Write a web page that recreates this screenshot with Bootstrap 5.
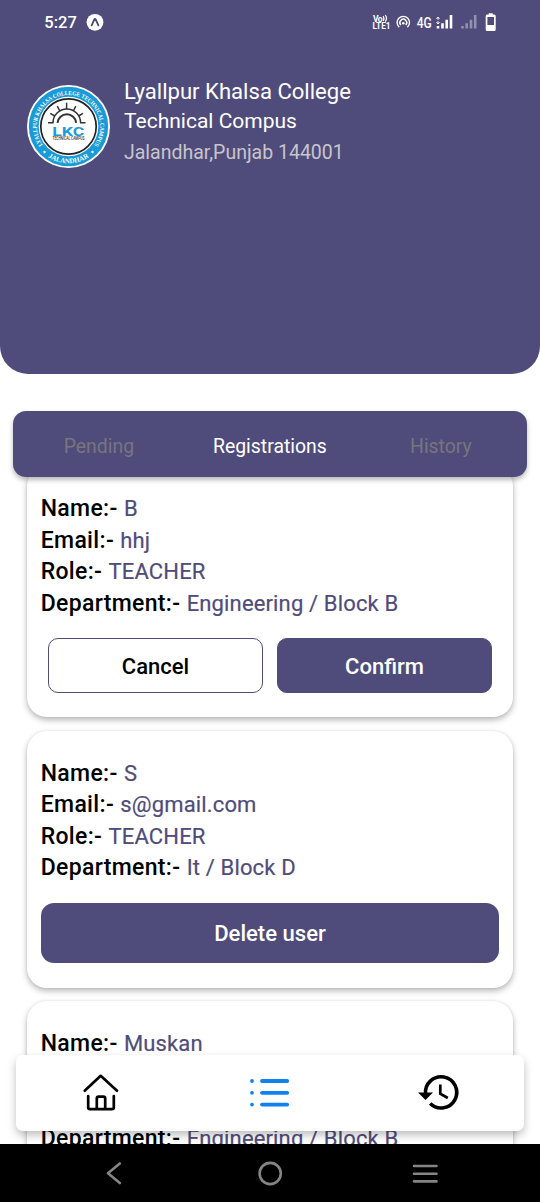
<!DOCTYPE html>
<html lang="en">
<head>
<meta charset="utf-8">
<meta name="viewport" content="width=device-width, initial-scale=1">
<title>Registrations</title>
<link href="https://cdn.jsdelivr.net/npm/bootstrap@5.3.0/dist/css/bootstrap.min.css" rel="stylesheet">
<style>
:root { --brand: #4f4c7b; }
body { font-family: Roboto, sans-serif; background: #fff; color: #000; }
svg { display: block; overflow: visible; }
.phone { width: 540px; height: 1202px; }
.screen { height: 1144px; }
.hero { height: 374px; background: var(--brand); border-radius: 0 0 28px 28px; }
.status { height: 44px; padding: 0 44px; font-size: 16.5px; }
.brand-row { padding: 37px 27px 0; gap: 14px; }
.crest { margin-top: 4px; }
.college { margin-top: -4px; }
.title { font-size: 22.1px; line-height: 29px; }
.campus { font-size: 21px; line-height: 30px; }
.place { font-size: 19.5px; line-height: 26px; color: #c8c5cb; margin-top: 3.5px; }
.tabs { height: 66px; margin: 37.4px 13.4px 0; background: var(--brand); border-radius: 13px; z-index: 2; font-size: 19.4px; box-shadow: 0 3px 5px rgba(0,0,0,.28); }
.tabs .nav-link { color: #77757e; padding: 4px 0 0; width: 171px; }
.tabs .nav-link.active { color: #fff; }
.people { margin: -11.4px 26.7px 0; gap: 13.3px; }
.person { border: 0; border-radius: 20px; padding: 27px 14px 0; box-shadow: 0 3px 6px rgba(0,0,0,.28), 0 0 3px rgba(0,0,0,.08); }
.field { font-size: 22px; line-height: 31.6px; white-space: nowrap; }
.field b { font-weight: 500; font-size: 23px; letter-spacing: .33px; margin-right: .8px; }
.field span { color: var(--brand); letter-spacing: .15px; -webkit-text-stroke: .2px var(--brand); }
.choices { padding: 18.5px 7px 24.5px; gap: 13.5px; }
.choice { height: 55px; border-radius: 10px; border: 1.35px solid var(--brand); font-size: 22px; font-weight: 500; padding: 3px 0 0; --bs-btn-color: #000; }
.solid { background: var(--brand); color: #fff; }
.remove { height: 60.5px; margin: 18.5px 0 24.5px; border: 0; border-radius: 13px; font-size: 22.1px; font-weight: 500; padding: 2px 0 0; }
.dock { left: 16px; right: 16px; bottom: 13.5px; height: 76px; background: #fff; border-radius: 7px; z-index: 3; box-shadow: 0 4px 8px rgba(0,0,0,.26); }
.system { height: 58px; background: #000; }
</style>
</head>
<body>
<div class="phone d-flex flex-column overflow-hidden">
  <main class="screen d-flex flex-column position-relative overflow-hidden flex-shrink-0">
    <header class="hero text-white flex-shrink-0">
      <div class="status d-flex align-items-center justify-content-between fw-medium">
        <svg width="60" height="44" viewBox="44 0 60 44">
          <text x="44.3" y="28.4" font-size="16.5" font-weight="500" fill="#fff" textLength="32.5">5:27</text>
          <circle cx="95" cy="22.3" r="8.4" fill="#fff"/>
          <path d="M91.7 25.4 94.3 19.4Q95 18.2 95.7 19.4L98.4 25.4" fill="none" stroke="#4f4c7b" stroke-width="1.8" stroke-linecap="round"/>
        </svg>
        <svg width="124" height="44" viewBox="372 0 124 44" fill="none" stroke="#fff">
          <g fill="#fff" stroke="none" font-weight="700">
            <text x="373" y="21.5" font-size="8.5" textLength="9.5">Vo</text>
            <text x="372.5" y="29" font-size="8.6" textLength="18" lengthAdjust="spacingAndGlyphs">LTE1</text>
            <text x="416.7" y="27.6" font-size="14.5" font-weight="500" textLength="15" lengthAdjust="spacingAndGlyphs">4G</text>
          </g>
          <path d="M383.2 16q1.6 2.500 0 5M385.300 15q2.400 3.300 0 6.600" stroke-width="1.200"/>
          <path d="M399.2 27.2A6.2 6.2 0 1 1 407.4 27.2M400.8 25A3.4 3.4 0 1 1 405.8 25" stroke-width="1.4"/>
          <circle cx="403.3" cy="23.2" r="1.3" fill="#fff" stroke="none"/>
          <path d="M438 28.5V26M442.5 28.5V23.3M446.7 28.5V19.7M451 28.5V15" stroke-width="2.6"/>
          <path d="M438 17.2v2.6M438 21.2v2.6M436.5 18.8l1.5-1.7 1.5 1.7M436.5 22.3l1.5 1.7 1.5-1.7" stroke-width="1"/>
          <path d="M462.5 28.5V26M466.7 28.5V23.3M471 28.5V19.7M475.2 28.5V15" stroke-width="2.6" opacity=".38"/>
          <path d="M488.7 13.2h4v1.4h1.5q1.5 0 1.5 1.5v13.3q0 1.5-1.5 1.5h-7q-1.5 0-1.5-1.5V16.1q0-1.5 1.5-1.5h1.5zM487.4 17v8h6.6v-8z" fill="#fff" fill-rule="evenodd" stroke="none"/>
        </svg>
      </div>
      <div class="brand-row d-flex">
        <svg class="crest flex-shrink-0" width="83" height="83" viewBox="-41.5 -41.5 83 83">
          <defs>
            <path id="ringTop" d="M-25.5 18.7A31.6 31.6 0 1 1 25.5 18.7"/>
            <path id="ringBottom" d="M-25.5 26.5A36.7 36.7 0 0 0 25.5 26.5"/>
          </defs>
          <circle r="41.5" fill="#fff"/>
          <circle r="39.7" fill="#1b9ad8"/>
          <circle r="29.8" fill="#fff"/>
          <circle r="27.7" fill="#fff" stroke="#222" stroke-width="1.7"/>
          <g fill="#fff" font-family="Liberation Serif, serif" font-weight="700">
            <text font-size="6"><textPath href="#ringTop" startOffset="50%" text-anchor="middle" textLength="138" lengthAdjust="spacingAndGlyphs">LYALLPUR KHALSA COLLEGE TECHNICAL CAMPUS</textPath></text>
            <text font-size="6.9"><textPath href="#ringBottom" startOffset="50%" text-anchor="middle">JALANDHAR</textPath></text>
            <circle cx="-24" cy="25.500" r="1.200"/><circle cx="24" cy="25.500" r="1.200"/>
          </g>
          <g fill="none" stroke="#333" stroke-width="1.5">
            <path d="M-15.5-3.7A13.8 13.8 0 0 1 12.1-3.7"/>
            <path d="M-11-3.7A9.4 9.4 0 0 1 7.7-3.7" stroke-width="2"/>
            <path d="M-20.5-3.7H-15M11.5-3.7H17M-18.2-13.2-13.7-10.5M-11.2-20.3-8.7-15.5M-1.9-23.7V-17.5M7.3-20.3 4.8-15.5M14.5-13.2 10-10.5"/>
          </g>
          <text x="-16.3" y="9" font-weight="700" font-size="12.3" fill="#1b9ad8" textLength="32" lengthAdjust="spacingAndGlyphs">LKC</text>
          <text x="-16" y="13.5" font-size="4.5" font-weight="500" fill="#333" textLength="32" lengthAdjust="spacingAndGlyphs">TECHNICAL CAMPUS</text>
        </svg>
        <div class="college text-nowrap">
          <div class="title">Lyallpur Khalsa College</div>
          <div class="title campus">Technical Compus</div>
          <div class="place">Jalandhar,Punjab 144001</div>
        </div>
      </div>
    </header>

    <nav class="tabs nav flex-nowrap align-items-center text-center position-relative flex-shrink-0">
      <a class="nav-link" href="#">Pending</a>
      <a class="nav-link active" href="#">Registrations</a>
      <a class="nav-link" href="#">History</a>
    </nav>

    <section class="people d-flex flex-column">
      <article class="person card flex-shrink-0">
        <div class="field"><b>Name:-</b> <span>B</span></div>
        <div class="field"><b>Email:-</b> <span>hhj</span></div>
        <div class="field"><b>Role:-</b> <span>TEACHER</span></div>
        <div class="field"><b>Department:-</b> <span>Engineering / Block B</span></div>
        <div class="choices d-flex">
          <button class="choice btn flex-fill w-50">Cancel</button>
          <button class="choice solid btn flex-fill w-50">Confirm</button>
        </div>
      </article>
      <article class="person card flex-shrink-0">
        <div class="field"><b>Name:-</b> <span>S</span></div>
        <div class="field"><b>Email:-</b> <span>s@gmail.com</span></div>
        <div class="field"><b>Role:-</b> <span>TEACHER</span></div>
        <div class="field"><b>Department:-</b> <span>It / Block D</span></div>
        <button class="remove solid btn">Delete user</button>
      </article>
      <article class="person card flex-shrink-0">
        <div class="field"><b>Name:-</b> <span>Muskan</span></div>
        <div class="field"><b>Email:-</b></div>
        <div class="field"><b>Role:-</b></div>
        <div class="field"><b>Department:-</b> <span>Engineering / Block B</span></div>
        <button class="remove solid btn invisible" aria-hidden="true"></button>
      </article>
    </section>

    <nav class="dock position-absolute d-flex align-items-center justify-content-around">
      <svg width="40" height="40" viewBox="81 1073 40 40" fill="none" stroke="#000" stroke-width="2.7" stroke-linecap="round" stroke-linejoin="round">
        <path d="M84.7 1090.7 100.7 1075.8 117 1090.7M88.2 1096V1107.5Q88.2 1109.2 90 1109.2H112Q113.8 1109.2 113.8 1107.5V1096M96.8 1109V1098.5Q96.8 1096.7 98.6 1096.7H103.4Q105.2 1096.7 105.2 1098.5V1109"/>
      </svg>
      <svg width="40" height="40" viewBox="250 1073 40 40" fill="none" stroke="#0f82ee" stroke-width="3.8" stroke-linecap="round">
        <path d="M252 1081h.01M252 1092.8h.01M252 1104.6h.01M262 1081H287.2M262 1092.8H287.2M262 1104.6H287.2"/>
      </svg>
      <svg width="40" height="40" viewBox="419 1073 40 40" fill="none" stroke="#000" stroke-width="3.6">
        <path d="M425.6 1094A15.6 15.6 0 1 1 430.2 1103.5"/>
        <path d="M418 1092.5H433L425.5 1100z" fill="#000" stroke="none"/>
        <path d="M440.3 1084.5V1093.8L447.8 1098" stroke-width="2.7"/>
      </svg>
    </nav>
  </main>

  <footer class="system flex-shrink-0">
    <svg width="540" height="58" viewBox="0 1144 540 58" fill="none" stroke="#858585" stroke-width="2.6" stroke-linecap="round" stroke-linejoin="round">
      <path d="M119.8 1163.5 108 1173.3 119.8 1183M414 1166H436.5M414 1173.7H436.5M414 1181.4H436.5"/>
      <circle cx="270.2" cy="1173.5" r="10.6"/>
    </svg>
  </footer>
</div>
<script src="https://cdn.jsdelivr.net/npm/bootstrap@5.3.0/dist/js/bootstrap.bundle.min.js"></script>
</body>
</html>
